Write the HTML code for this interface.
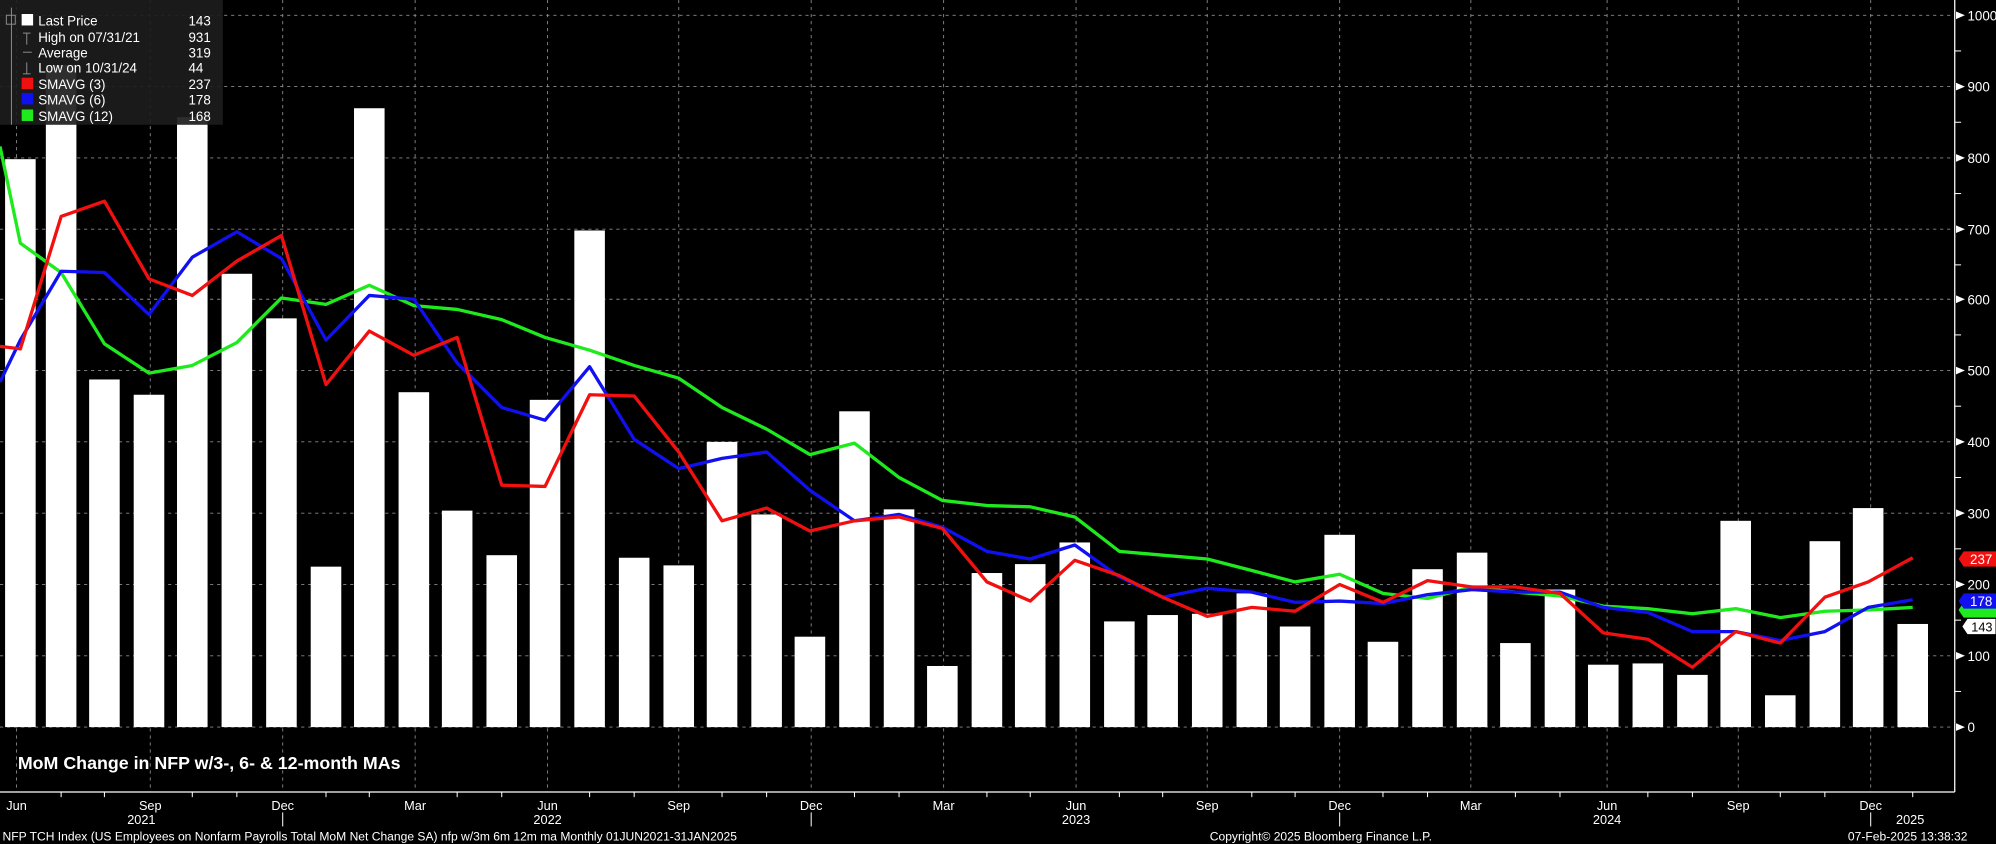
<!DOCTYPE html>
<html><head><meta charset="utf-8"><style>
html,body{margin:0;padding:0;background:#000;overflow:hidden}
svg{display:block}
text{font-family:"Liberation Sans",sans-serif;fill:#fff}
</style></head><body>
<svg width="1996" height="844" viewBox="0 0 1567.4 662.8" preserveAspectRatio="none" xmlns="http://www.w3.org/2000/svg">
<rect width="1567.4" height="662.8" fill="#000"/>
<g stroke="#8a8a8a" stroke-width="0.7" stroke-dasharray="2.5,3">
<line x1="0" x2="1535" y1="12" y2="12"/><line x1="0" x2="1535" y1="68" y2="68"/><line x1="0" x2="1535" y1="124" y2="124"/><line x1="0" x2="1535" y1="180" y2="180"/><line x1="0" x2="1535" y1="235" y2="235"/><line x1="0" x2="1535" y1="291" y2="291"/><line x1="0" x2="1535" y1="347" y2="347"/><line x1="0" x2="1535" y1="403" y2="403"/><line x1="0" x2="1535" y1="459" y2="459"/><line x1="0" x2="1535" y1="515" y2="515"/><line x1="0" x2="1535" y1="571" y2="571"/>
</g>
<g stroke="#8a8a8a" stroke-width="0.7" stroke-dasharray="2.5,3">
<line x1="13" x2="13" y1="0" y2="622"/><line x1="118" x2="118" y1="0" y2="622"/><line x1="222" x2="222" y1="0" y2="622"/><line x1="326" x2="326" y1="0" y2="622"/><line x1="430" x2="430" y1="0" y2="622"/><line x1="533" x2="533" y1="0" y2="622"/><line x1="637" x2="637" y1="0" y2="622"/><line x1="741" x2="741" y1="0" y2="622"/><line x1="845" x2="845" y1="0" y2="622"/><line x1="948" x2="948" y1="0" y2="622"/><line x1="1052" x2="1052" y1="0" y2="622"/><line x1="1155" x2="1155" y1="0" y2="622"/><line x1="1262" x2="1262" y1="0" y2="622"/><line x1="1365" x2="1365" y1="0" y2="622"/><line x1="1469" x2="1469" y1="0" y2="622"/>
</g>
<g fill="#fff">
<rect x="4" y="125" width="24" height="446"/><rect x="36" y="51" width="24" height="520"/><rect x="70" y="298" width="24" height="273"/><rect x="105" y="310" width="24" height="261"/><rect x="139" y="92" width="24" height="479"/><rect x="174" y="215" width="24" height="356"/><rect x="209" y="250" width="24" height="321"/><rect x="244" y="445" width="24" height="126"/><rect x="278" y="85" width="24" height="486"/><rect x="313" y="308" width="24" height="263"/><rect x="347" y="401" width="24" height="170"/><rect x="382" y="436" width="24" height="135"/><rect x="416" y="314" width="24" height="257"/><rect x="451" y="181" width="24" height="390"/><rect x="486" y="438" width="24" height="133"/><rect x="521" y="444" width="24" height="127"/><rect x="555" y="347" width="24" height="224"/><rect x="590" y="404" width="24" height="167"/><rect x="624" y="500" width="24" height="71"/><rect x="659" y="323" width="24" height="248"/><rect x="694" y="400" width="24" height="171"/><rect x="728" y="523" width="24" height="48"/><rect x="763" y="450" width="24" height="121"/><rect x="797" y="443" width="24" height="128"/><rect x="832" y="426" width="24" height="145"/><rect x="867" y="488" width="24" height="83"/><rect x="901" y="483" width="24" height="88"/><rect x="936" y="482" width="24" height="89"/><rect x="971" y="466" width="24" height="105"/><rect x="1005" y="492" width="24" height="79"/><rect x="1040" y="420" width="24" height="151"/><rect x="1074" y="504" width="24" height="67"/><rect x="1109" y="447" width="24" height="124"/><rect x="1144" y="434" width="24" height="137"/><rect x="1178" y="505" width="24" height="66"/><rect x="1213" y="463" width="24" height="108"/><rect x="1247" y="522" width="24" height="49"/><rect x="1282" y="521" width="24" height="50"/><rect x="1317" y="530" width="24" height="41"/><rect x="1351" y="409" width="24" height="162"/><rect x="1386" y="546" width="24" height="25"/><rect x="1421" y="425" width="24" height="146"/><rect x="1455" y="399" width="24" height="172"/><rect x="1490" y="490" width="24" height="81"/>
</g>
<g fill="none" stroke-width="2.6" stroke-linejoin="round">
<polyline stroke="#1eea1e" points="0,115 16,191 48,214 82,270 117,293 151,287 186,269 221,234 256,239 290,224 325,240 359,243 394,251 428,265 463,275 498,287 533,297 567,320 602,337 636,357 671,348 706,375 740,393 775,397 809,398 844,406 879,433 913,436 948,439 983,448 1017,457 1052,451 1086,466 1121,470 1156,461 1190,465 1225,468 1259,476 1294,478 1329,482 1363,478 1398,485 1433,480 1467,479 1502,477"/>
<polyline stroke="#1010f0" points="0,300 16,267 48,213 82,214 117,247 151,202 186,182 221,203 256,267 290,232 325,235 359,285 394,320 428,330 463,288 498,345 533,368 567,360 602,355 636,385 671,409 706,404 740,414 775,433 809,439 844,428 879,453 913,469 948,462 983,465 1017,473 1052,472 1086,474 1121,467 1156,463 1190,465 1225,465 1259,477 1294,481 1329,496 1363,496 1398,503 1433,496 1467,477 1502,471"/>
<polyline stroke="#f01010" points="0,272 16,274 48,170 82,158 117,219 151,232 186,205 221,185 256,302 290,260 325,279 359,265 394,381 428,382 463,310 498,311 533,355 567,409 602,399 636,417 671,409 706,406 740,415 775,457 809,472 844,440 879,452 913,469 948,484 983,477 1017,480 1052,459 1086,473 1121,456 1156,461 1190,461 1225,466 1259,497 1294,502 1329,524 1363,496 1398,505 1433,469 1467,457 1502,438"/>
</g>
<rect x="0" y="0" width="175" height="98" fill="#1c1c1c" opacity="0.92"/>
<g font-size="10.5">
<rect x="17" y="11" width="9" height="9" fill="#fff"/>
<text x="30" y="20">Last Price</text><text x="148" y="20">143</text>
<text x="30" y="33">High on 07/31/21</text><text x="148" y="33">931</text>
<text x="30" y="45">Average</text><text x="148" y="45">319</text>
<text x="30" y="57">Low on 10/31/24</text><text x="148" y="57">44</text>
<rect x="17" y="61" width="9" height="9" fill="#f01010"/>
<text x="30" y="70">SMAVG (3)</text><text x="148" y="70">237</text>
<rect x="17" y="73" width="9" height="9" fill="#1010f0"/>
<text x="30" y="82">SMAVG (6)</text><text x="148" y="82">178</text>
<rect x="17" y="86" width="9" height="9" fill="#1eea1e"/>
<text x="30" y="95">SMAVG (12)</text><text x="148" y="95">168</text>
</g>
<g stroke="#888" stroke-width="0.8" fill="none"><line x1="21" y1="26" x2="21" y2="35"/><line x1="18" y1="26" x2="24" y2="26"/><line x1="18" y1="41" x2="25" y2="41"/><line x1="21" y1="49" x2="21" y2="58"/><line x1="18" y1="58" x2="24" y2="58"/><line x1="9" y1="6" x2="9" y2="98"/><rect x="5" y="12" width="7" height="7"/></g>
<line x1="1535" y1="0" x2="1535" y2="622" stroke="#fff" stroke-width="1"/>
<line x1="0" y1="622" x2="1535" y2="622" stroke="#fff" stroke-width="1"/>
<g stroke="#fff" stroke-width="0.8">
<line x1="1535" x2="1540" y1="40" y2="40"/><line x1="1535" x2="1540" y1="96" y2="96"/><line x1="1535" x2="1540" y1="152" y2="152"/><line x1="1535" x2="1540" y1="208" y2="208"/><line x1="1535" x2="1540" y1="263" y2="263"/><line x1="1535" x2="1540" y1="319" y2="319"/><line x1="1535" x2="1540" y1="375" y2="375"/><line x1="1535" x2="1540" y1="431" y2="431"/><line x1="1535" x2="1540" y1="487" y2="487"/><line x1="1535" x2="1540" y1="543" y2="543"/>
<line x1="48" x2="48" y1="622" y2="626"/><line x1="82" x2="82" y1="622" y2="626"/><line x1="151" x2="151" y1="622" y2="626"/><line x1="186" x2="186" y1="622" y2="626"/><line x1="256" x2="256" y1="622" y2="626"/><line x1="290" x2="290" y1="622" y2="626"/><line x1="359" x2="359" y1="622" y2="626"/><line x1="394" x2="394" y1="622" y2="626"/><line x1="463" x2="463" y1="622" y2="626"/><line x1="498" x2="498" y1="622" y2="626"/><line x1="567" x2="567" y1="622" y2="626"/><line x1="602" x2="602" y1="622" y2="626"/><line x1="671" x2="671" y1="622" y2="626"/><line x1="706" x2="706" y1="622" y2="626"/><line x1="775" x2="775" y1="622" y2="626"/><line x1="809" x2="809" y1="622" y2="626"/><line x1="879" x2="879" y1="622" y2="626"/><line x1="913" x2="913" y1="622" y2="626"/><line x1="983" x2="983" y1="622" y2="626"/><line x1="1017" x2="1017" y1="622" y2="626"/><line x1="1086" x2="1086" y1="622" y2="626"/><line x1="1121" x2="1121" y1="622" y2="626"/><line x1="1190" x2="1190" y1="622" y2="626"/><line x1="1225" x2="1225" y1="622" y2="626"/><line x1="1294" x2="1294" y1="622" y2="626"/><line x1="1329" x2="1329" y1="622" y2="626"/><line x1="1398" x2="1398" y1="622" y2="626"/><line x1="1433" x2="1433" y1="622" y2="626"/><line x1="1502" x2="1502" y1="622" y2="626"/>
</g>
<g font-size="10.5">
<text x="1545" y="16">1000</text><text x="1545" y="72">900</text><text x="1545" y="128">800</text><text x="1545" y="184">700</text><text x="1545" y="239">600</text><text x="1545" y="295">500</text><text x="1545" y="351">400</text><text x="1545" y="407">300</text><text x="1545" y="463">200</text><text x="1545" y="519">100</text><text x="1545" y="575">0</text>
</g>
<g fill="#fff"><path d="M1536,9 l7,3 l-7,3z"/><path d="M1536,65 l7,3 l-7,3z"/><path d="M1536,121 l7,3 l-7,3z"/><path d="M1536,177 l7,3 l-7,3z"/><path d="M1536,232 l7,3 l-7,3z"/><path d="M1536,288 l7,3 l-7,3z"/><path d="M1536,344 l7,3 l-7,3z"/><path d="M1536,400 l7,3 l-7,3z"/><path d="M1536,456 l7,3 l-7,3z"/><path d="M1536,512 l7,3 l-7,3z"/><path d="M1536,568 l7,3 l-7,3z"/></g>
<path d="M1541,492 l4,-6 h22 v12 h-22z" fill="#fff"/><text x="1548" y="496" font-size="10" style="fill:#000">143</text>
<path d="M1538,479 l4,-6 h26 v12 h-26z" fill="#1eea1e"/>
<path d="M1538,472 l4,-6 h26 v12 h-26z" fill="#1010f0"/><text x="1547" y="476" font-size="10.5">178</text>
<path d="M1538,439 l4,-6 h26 v12 h-26z" fill="#f01010"/><text x="1547" y="443" font-size="10.5">237</text>
<text x="14" y="604" font-size="14" font-weight="bold">MoM Change in NFP w/3-, 6- &amp; 12-month MAs</text>
<g font-size="10" text-anchor="middle">
<text x="13" y="636">Jun</text><text x="118" y="636">Sep</text><text x="222" y="636">Dec</text><text x="326" y="636">Mar</text><text x="430" y="636">Jun</text><text x="533" y="636">Sep</text><text x="637" y="636">Dec</text><text x="741" y="636">Mar</text><text x="845" y="636">Jun</text><text x="948" y="636">Sep</text><text x="1052" y="636">Dec</text><text x="1155" y="636">Mar</text><text x="1262" y="636">Jun</text><text x="1365" y="636">Sep</text><text x="1469" y="636">Dec</text>
<text x="111" y="647">2021</text><text x="430" y="647">2022</text><text x="845" y="647">2023</text><text x="1262" y="647">2024</text><text x="1500" y="647">2025</text>
</g>
<g stroke="#fff" stroke-width="0.8"><line x1="222" y1="638" x2="222" y2="649"/><line x1="637" y1="638" x2="637" y2="649"/><line x1="1052" y1="638" x2="1052" y2="649"/><line x1="1469" y1="638" x2="1469" y2="649"/></g>
<g font-size="9.5">
<text x="2" y="660">NFP TCH Index (US Employees on Nonfarm Payrolls Total MoM Net Change SA) nfp w/3m 6m 12m ma  Monthly 01JUN2021-31JAN2025</text>
<text x="950" y="660">Copyright© 2025 Bloomberg Finance L.P.</text>
<text x="1545" y="660" text-anchor="end">07-Feb-2025 13:38:32</text>
</g>
</svg>
</body></html>
